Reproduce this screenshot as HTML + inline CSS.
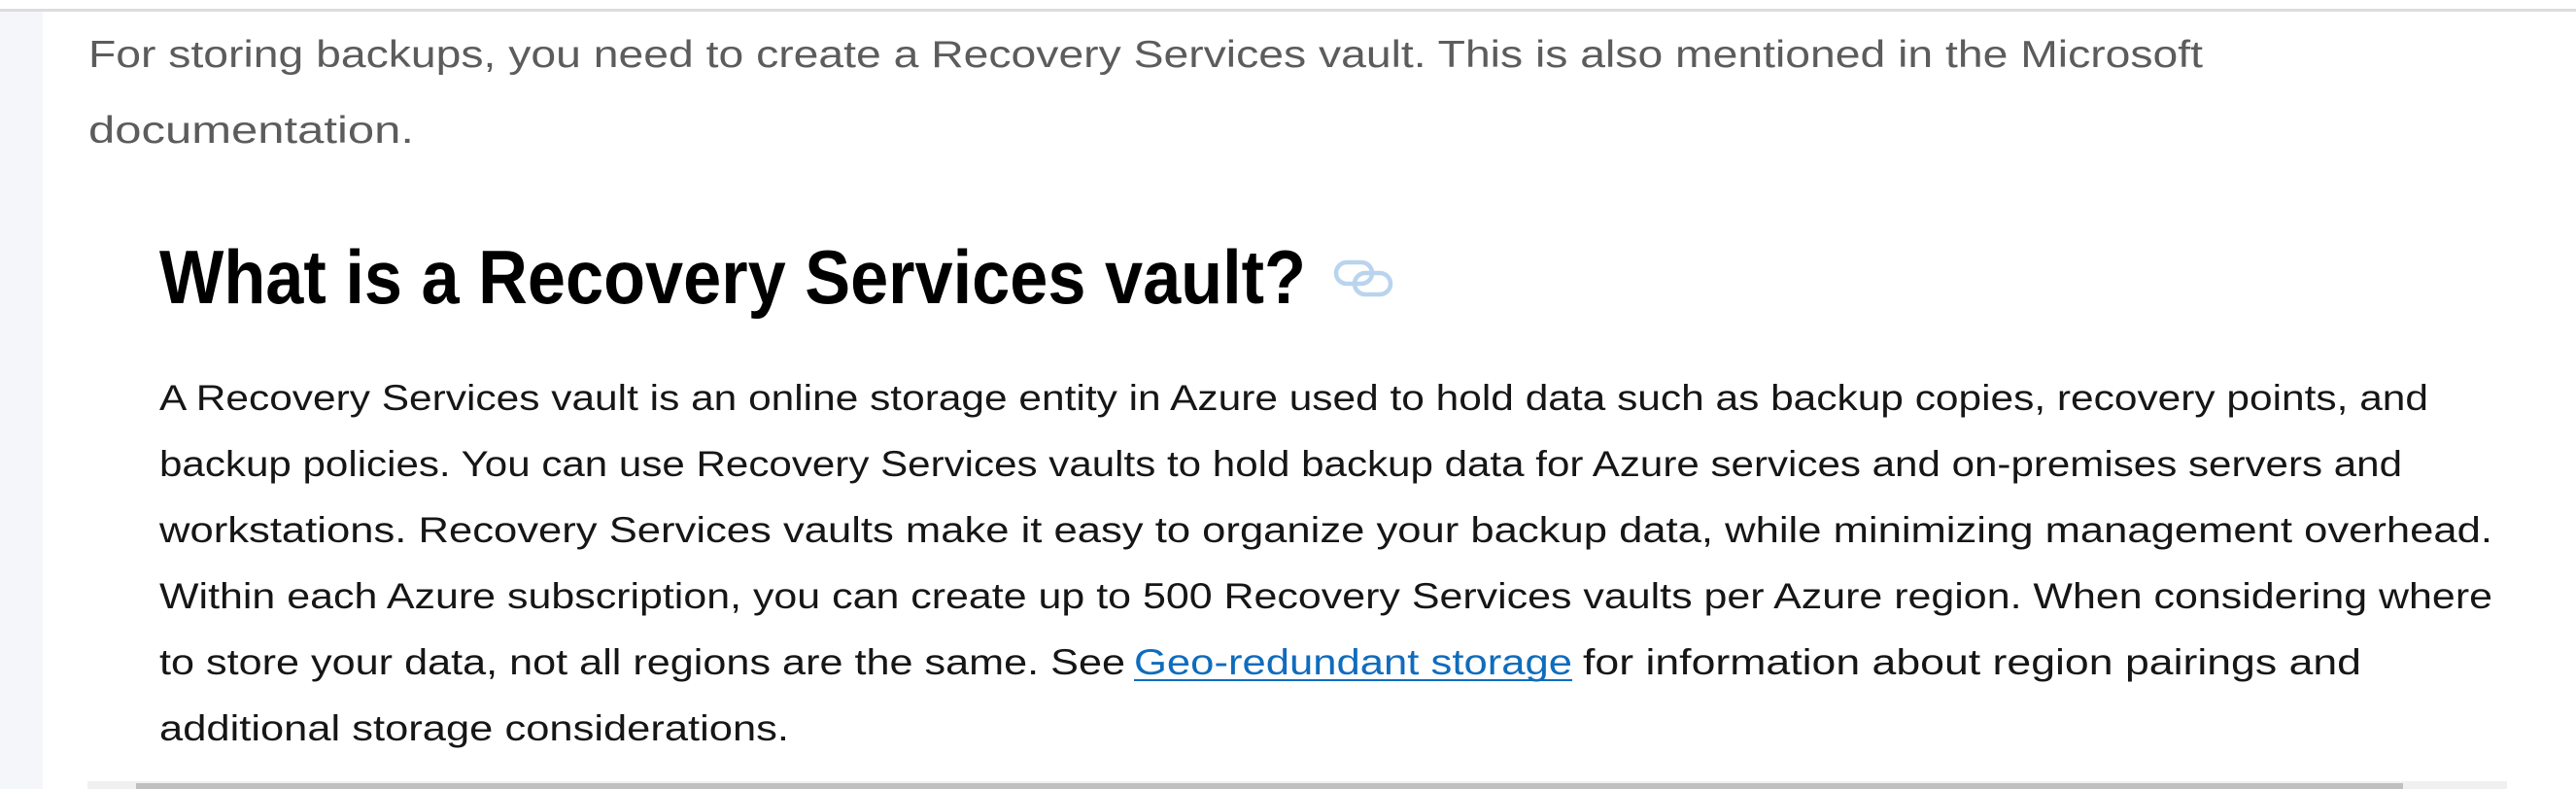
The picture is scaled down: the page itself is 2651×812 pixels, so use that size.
<!DOCTYPE html>
<html><head><meta charset="utf-8"><style>
html,body{margin:0;padding:0;background:#fff;}
svg{display:block}
</style></head><body>
<svg width="2651" height="812" viewBox="0 0 2651 812" xmlns="http://www.w3.org/2000/svg">
<rect x="0" y="0" width="2651" height="812" fill="#fff"/>
<rect x="0" y="12" width="44" height="800" fill="#f4f6fa"/>
<rect x="0" y="9" width="2651" height="3" fill="#dcdcdc"/>
<g font-family="'Liberation Sans', sans-serif" fill="#5c5c5c" font-size="39">
<text x="91" y="69" textLength="2176" lengthAdjust="spacingAndGlyphs">For storing backups, you need to create a Recovery Services vault. This is also mentioned in the Microsoft</text>
<text x="91" y="147" textLength="335" lengthAdjust="spacingAndGlyphs">documentation.</text>
</g>
<text x="164" y="312" font-family="'Liberation Sans', sans-serif" font-size="78" font-weight="bold" fill="#000" textLength="1180" lengthAdjust="spacingAndGlyphs">What is a Recovery Services vault?</text>
<g fill="none" stroke="#b9d4ed" stroke-width="4.5">
<rect x="1375" y="270" width="37" height="22" rx="11"/>
<rect x="1394" y="281" width="37" height="22" rx="11"/>
</g>
<g font-family="'Liberation Sans', sans-serif" font-size="37" fill="#161616">
<text x="164" y="422" textLength="2335" lengthAdjust="spacingAndGlyphs">A Recovery Services vault is an online storage entity in Azure used to hold data such as backup copies, recovery points, and</text>
<text x="164" y="490" textLength="2308" lengthAdjust="spacingAndGlyphs">backup policies. You can use Recovery Services vaults to hold backup data for Azure services and on-premises servers and</text>
<text x="164" y="558" textLength="2401" lengthAdjust="spacingAndGlyphs">workstations. Recovery Services vaults make it easy to organize your backup data, while minimizing management overhead.</text>
<text x="164" y="626" textLength="2401" lengthAdjust="spacingAndGlyphs">Within each Azure subscription, you can create up to 500 Recovery Services vaults per Azure region. When considering where</text>
<text x="164" y="694" textLength="994" lengthAdjust="spacingAndGlyphs">to store your data, not all regions are the same. See</text>
<text x="1167" y="694" textLength="451" lengthAdjust="spacingAndGlyphs" fill="#0f6cbd">Geo-redundant storage</text>
<rect x="1167" y="699" width="451" height="2" fill="#0f6cbd"/>
<text x="1629" y="694" textLength="801" lengthAdjust="spacingAndGlyphs">for information about region pairings and</text>
<text x="164" y="762" textLength="648" lengthAdjust="spacingAndGlyphs">additional storage considerations.</text>
</g>
<rect x="90" y="804" width="2490" height="8" fill="#f0f0f0"/>
<rect x="140" y="806" width="2333" height="6" fill="#c0c0c0"/>
</svg>
</body></html>
